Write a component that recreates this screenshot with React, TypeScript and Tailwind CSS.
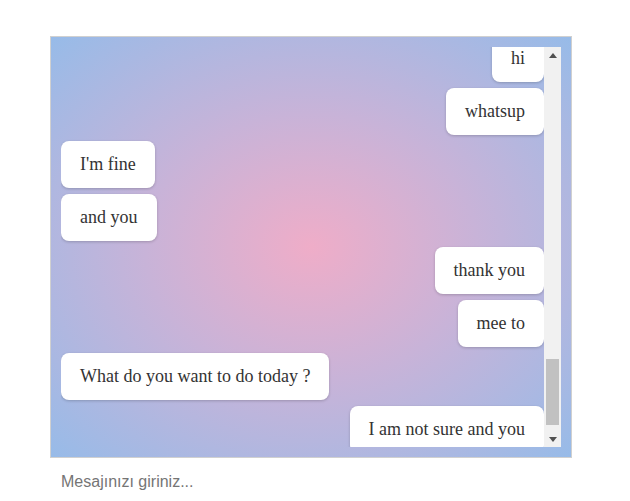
import { useLayoutEffect, useRef } from 'react'

type Msg = { text: string; mine: boolean }

const history: Msg[] = [
  { text: 'hello', mine: false },
  { text: 'hey', mine: true },
  { text: 'how was your day', mine: false },
  { text: 'good', mine: true },
  { text: 'nice', mine: false },
  { text: 'what are you doing', mine: true },
  { text: 'nothing', mine: false },
  { text: 'ok', mine: true },
]

const recent: Msg[] = [
  { text: 'hi', mine: true },
  { text: 'whatsup', mine: true },
  { text: "I'm fine", mine: false },
  { text: 'and you', mine: false },
  { text: 'thank you', mine: true },
  { text: 'mee to', mine: true },
  { text: 'What do you want to do today ?', mine: false },
  { text: 'I am not sure and you', mine: true },
]

function Arrow({ up }: { up?: boolean }) {
  return (
    <div className="h-[16px] flex items-center justify-center">
      <svg width="8" height="5" viewBox="0 0 8 5">
        <polygon points={up ? '0,5 8,5 4,0' : '0,0 8,0 4,5'} fill="#505050" />
      </svg>
    </div>
  )
}

export default function App() {
  const listRef = useRef<HTMLDivElement>(null)
  const anchorRef = useRef<HTMLDivElement>(null)

  // earlier messages so the list can scroll
  const older: Msg[] = []
  for (let i = 0; i < 30; i++) older.push(history[i % history.length])

  useLayoutEffect(() => {
    if (listRef.current && anchorRef.current) {
      listRef.current.scrollTop = anchorRef.current.offsetTop + 12
    }
  }, [])

  return (
    <div className="pt-9 pl-[50px] font-['Liberation_Serif',serif]">
      <div className="w-[522px] border border-[#d0d0d0] p-[10px] bg-[radial-gradient(ellipse_at_center,#efadc8_0%,#c8b3d8_45%,#97bbe8_100%)]">
        <div className="flex h-[400px]">
          <div
            ref={listRef}
            className="relative flex-1 overflow-y-scroll pb-[8px] [scrollbar-width:none]"
          >
            {[...older, ...recent].map((m, i) => (
              <div
                key={i}
                ref={i === older.length ? anchorRef : undefined}
                className={`flex mb-[6px] ${m.mine ? 'justify-end' : 'justify-start'}`}
              >
                <div className="bg-white rounded-lg px-[19px] py-[13px] leading-[21px] text-[18px] text-[#333] shadow-[0_1px_3px_rgba(0,0,0,0.2)] whitespace-nowrap">
                  {m.text}
                </div>
              </div>
            ))}
          </div>
          {/* scrollbar */}
          <div className="w-[17px] bg-[#f1f1f1] flex flex-col">
            <Arrow up />
            <div className="flex-1 flex flex-col px-[2px]">
              <div className="h-[296px]" />
              <div className="h-[66px] bg-[#c1c1c1]" />
            </div>
            <Arrow />
          </div>
        </div>
      </div>
      <input
        type="text"
        placeholder="Mesajınızı giriniz..."
        className="w-[522px] pt-[12px] pb-[10px] px-[11px] text-base font-['Liberation_Sans',Arial,sans-serif] text-[#333] placeholder:text-[#757575] outline-none bg-transparent"
      />
    </div>
  )
}
